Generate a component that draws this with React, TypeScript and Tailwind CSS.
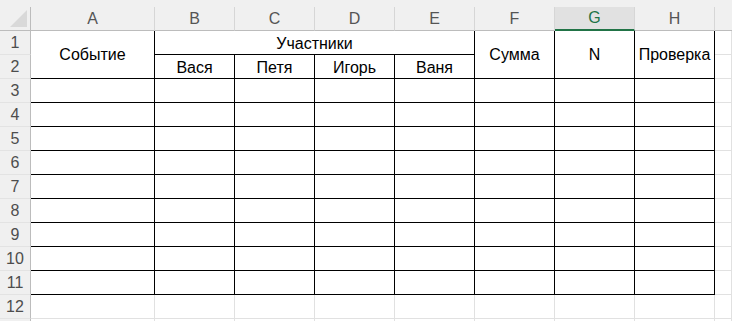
import React from 'react';

const COLS = ['A', 'B', 'C', 'D', 'E', 'F', 'G', 'H'];
const NAMES = ['Вася', 'Петя', 'Игорь', 'Ваня'];
const SELECTED_COL = 'G';

// grid line colours
const GRID = 'border-[#e1e1e1]';
const INK = 'border-black';

function Cell({ className = '', children }: { className?: string; children?: React.ReactNode }) {
  return (
    <div className={`flex items-center justify-center border-r border-b bg-white text-[16px] text-black whitespace-nowrap overflow-hidden ${className}`}>
      {children}
    </div>
  );
}

function RowHeader({ n }: { n: number }) {
  return (
    <div className="flex items-center justify-center bg-[#f0f0f0] border-r border-b border-r-[#bcbcbc] border-b-[#e3e3e3] text-[16px] text-[#4d4d4d] pt-px">
      {n}
    </div>
  );
}

export default function App() {
  return (
    <div className="w-[732px] h-[321px] overflow-hidden bg-white select-none" style={{ fontFamily: '"Liberation Sans", Arial, sans-serif' }}>
      {/* strip under the formula bar */}
      <div className="h-[7px] bg-[#f0f0f0]" />

      <div className="grid grid-cols-[31px_124px_repeat(7,80px)_17px] grid-rows-[24px_repeat(12,24px)_24px]">
        {/* select-all corner */}
        <div className="relative bg-[#f0f0f0] border-r border-b border-r-[#bcbcbc] border-b-[#bcbcbc]">
          <svg className="absolute right-[3px] bottom-[3px]" width="17" height="17" viewBox="0 0 17 17">
            <path d="M17 0 L17 17 L0 17 Z" fill="#d9d9d9" />
          </svg>
        </div>

        {/* column letters */}
        {COLS.map((c) => (
          <div
            key={c}
            className={`flex items-center justify-center border-r border-[#d6d6d6] text-[16px] ${
              c === SELECTED_COL
                ? 'bg-[#e1e1e1] text-[#217346] border-b-2 border-b-[#217346]'
                : 'bg-[#f0f0f0] text-[#555555] border-b border-b-[#bcbcbc]'
            }`}
          >
            {c}
          </div>
        ))}
        <div className="bg-[#f0f0f0] border-b border-b-[#bcbcbc]" />

        {/* rows 1–2: merged table heading */}
        <RowHeader n={1} />
        <Cell className={`row-span-2 ${INK} pt-px`}>Событие</Cell>
        <Cell className={`col-span-4 ${INK} pt-0.5`}>Участники</Cell>
        <Cell className={`row-span-2 ${INK} pt-px`}>Сумма</Cell>
        <Cell className={`row-span-2 ${INK} pt-px`}>N</Cell>
        <Cell className={`row-span-2 ${INK} pt-px`}>Проверка</Cell>
        <Cell className={GRID} />

        <RowHeader n={2} />
        {NAMES.map((name) => (
          <Cell key={name} className={`${INK} pt-0.5`}>{name}</Cell>
        ))}
        <Cell className={GRID} />

        {/* empty bordered rows 3–11 */}
        {Array.from({ length: 9 }, (_, i) => i + 3).map((n) => (
          <React.Fragment key={n}>
            <RowHeader n={n} />
            {COLS.map((c) => (
              <Cell key={c} className={INK} />
            ))}
            <Cell className={GRID} />
          </React.Fragment>
        ))}

        {/* row 12 and a sliver of the next one */}
        <RowHeader n={12} />
        {COLS.map((c) => (
          <Cell key={c} className={GRID} />
        ))}
        <Cell className={GRID} />

        <div className="bg-[#f0f0f0] border-r border-r-[#bcbcbc]" />
        {COLS.map((c) => (
          <Cell key={c} className={`${GRID} border-b-0`} />
        ))}
        <Cell className={`${GRID} border-b-0`} />
      </div>
    </div>
  );
}
